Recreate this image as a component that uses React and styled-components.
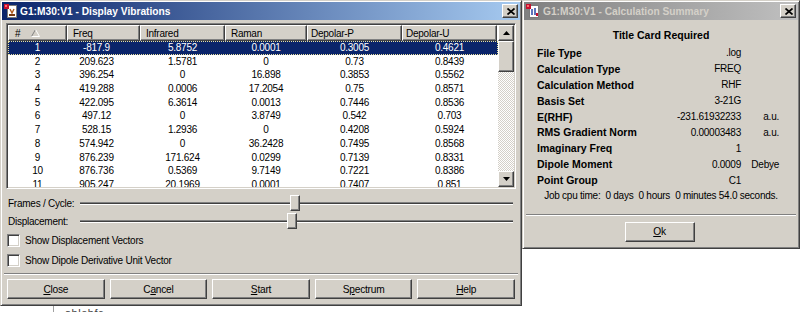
import React from 'react';
import styled, { createGlobalStyle, css } from 'styled-components';

const FACE = '#d4d0c8';
const SHADOW = '#808080';
const DARK = '#404040';
const HILITE = '#ffffff';
const UI = `"Liberation Sans", Arial, sans-serif`;
const BOLD = `"Liberation Sans", Arial, sans-serif`;

const Global = createGlobalStyle`
  html, body { margin: 0; padding: 0; background: #fff; }
  body { width: 800px; height: 312px; overflow: hidden; font-family: ${UI}; font-size: 10px; letter-spacing: -0.25px; color: #000; }
  #root { width: 800px; height: 312px; }
`;

const raised = css`
  box-sizing: border-box;
  background: ${FACE};
  border: 1px solid;
  border-color: ${HILITE} ${DARK} ${DARK} ${HILITE};
  box-shadow: inset -1px -1px ${SHADOW}, inset 1px 1px ${FACE};
`;

const sunken = css`
  box-sizing: border-box;
  border: 1px solid;
  border-color: ${SHADOW} ${HILITE} ${HILITE} ${SHADOW};
  box-shadow: inset 1px 1px ${DARK}, inset -1px -1px ${FACE};
`;

const Desktop = styled.div`
  display: flex;
  align-items: flex-start;
  width: 800px;
  height: 312px;
  overflow: hidden;
  background: #fff;
`;

const LeftColumn = styled.div`
  display: flex;
  flex-direction: column;
  width: 522px;
  height: 312px;
  flex: none;
`;

const Window = styled.div`
  box-sizing: border-box;
  width: ${(p) => p.$w}px;
  height: ${(p) => p.$h}px;
  flex: none;
  background: ${FACE};
  border: 1px solid;
  border-color: ${FACE} ${DARK} ${DARK} ${FACE};
  box-shadow: inset 1px 1px ${HILITE}, inset -1px -1px ${SHADOW};
  padding: 1px;
  display: flex;
  flex-direction: column;
`;

const TitleBar = styled.div`
  height: 18px;
  flex: none;
  display: flex;
  align-items: center;
  gap: ${(p) => (p.$active ? 2 : 3)}px;
  padding: 0 2px;
  background: ${(p) =>
    p.$active
      ? 'linear-gradient(to right, #0a246a, #a6caf0)'
      : 'linear-gradient(to right, #808080, #c0c0c0)'};
  color: ${(p) => (p.$active ? '#fff' : '#d4d0c8')};
  font: bold 10.2px ${BOLD};
  letter-spacing: 0;
  white-space: nowrap;
`;

const TitleText = styled.span`
  flex: 1;
  padding-top: 1px;
`;

const CloseButton = styled.div`
  ${raised};
  width: 16px;
  height: 14px;
  display: flex;
  align-items: center;
  justify-content: center;
  padding: 0 0 0 1px;
`;

const AppIcon = ({ variant }) => (
  <svg width="14" height="14" viewBox="0 0 14 14">
    <rect x="3.5" y="1.5" width="9" height="12" fill="#fff" stroke="#7a7a7a" />
    <rect x="0" y="0" width="5" height="5" fill="#c8102e" />
    <rect x="1" y="1" width="2" height="2" fill="#ff6a6a" />
    {variant === 'a' ? (
      <>
        <path d="M6 5 L8 9 L10 5" stroke="#b05a1a" strokeWidth="1.4" fill="none" />
        <rect x="5" y="10" width="6" height="2" fill="#7a3a10" />
      </>
    ) : (
      <>
        <path d="M6 5 L6 11 M9 4 L9 11" stroke="#1a3aa0" strokeWidth="1.4" />
        <rect x="10" y="9" width="2" height="3" fill="#c8102e" />
      </>
    )}
  </svg>
);

const CloseGlyph = () => (
  <svg width="8" height="7" viewBox="0 0 8 7">
    <path d="M0.5 0.5 L7.5 6.5 M7.5 0.5 L0.5 6.5" stroke="#000" strokeWidth="1.7" />
  </svg>
);

/* ---------- Display Vibrations ---------- */

const VibBody = styled.div`
  flex: 1;
  display: flex;
  flex-direction: column;
`;

const ListBox = styled.div`
  ${sunken};
  margin: 3px 4px 0;
  height: 166px;
  flex: none;
  padding: 1px;
  background: #fff;
  display: flex;
  overflow: hidden;
`;

const ListMain = styled.div`
  flex: 1;
  min-width: 0;
  display: flex;
  flex-direction: column;
  overflow: hidden;
`;

const GridRow = styled.div`
  display: grid;
  grid-template-columns: 59px 73px 85px 82px 95px 95px;
  flex: none;
`;

const HeaderCell = styled.div`
  ${raised};
  height: 16px;
  display: flex;
  align-items: center;
  gap: 11px;
  padding-left: ${(p) => p.$pl}px;
  white-space: nowrap;
  overflow: hidden;
`;

const DataRow = styled(GridRow)`
  height: 13.7px;
  line-height: 13.7px;
  background: ${(p) => (p.$selected ? '#0a246a' : 'transparent')};
  color: ${(p) => (p.$selected ? '#fff' : '#000')};
  outline: ${(p) => (p.$selected ? '1px dotted #e8e0a0' : 'none')};
  outline-offset: -1px;
`;

const DataCell = styled.div`
  text-align: center;
  padding-right: ${(p) => p.$pr || 0}px;
  white-space: nowrap;
`;

const ScrollBar = styled.div`
  width: 16px;
  flex: none;
  display: flex;
  flex-direction: column;
  background: repeating-conic-gradient(${FACE} 0 25%, #fff 0 50%) 0 0 / 2px 2px;
`;

const ScrollButton = styled.div`
  ${raised};
  width: 16px;
  height: 16px;
  flex: none;
  display: flex;
  align-items: center;
  justify-content: center;
`;

const ScrollThumb = styled.div`
  ${raised};
  width: 16px;
  height: 31px;
  flex: none;
`;

const ScrollTrack = styled.div`
  flex: 1;
`;

const Arrow = ({ dir }) => (
  <svg width="7" height="4" viewBox="0 0 7 4">
    <path d={dir === 'up' ? 'M3.5 0 L7 4 L0 4 Z' : 'M0 0 L7 0 L3.5 4 Z'} fill="#000" />
  </svg>
);

const SortMark = () => (
  <svg width="9" height="8" viewBox="0 0 9 8">
    <path d="M4.5 0.5 L0.5 7.5" stroke="#808080" />
    <path d="M4.5 0.5 L8.5 7.5 L0.5 7.5" stroke="#fff" fill="none" />
  </svg>
);

const SliderRow = styled.div`
  height: 18px;
  flex: none;
  display: flex;
  align-items: center;
  padding: 0 7px 0 6px;
  margin-top: ${(p) => p.$mt || 0}px;
`;

const SliderLabel = styled.span`
  width: 72px;
  flex: none;
  white-space: nowrap;
`;

const SliderTrack = styled.div`
  position: relative;
  flex: 1;
  height: 18px;
  display: flex;
  align-items: center;
`;

const SliderChannel = styled.div`
  flex: 1;
  height: 1px;
  border-top: 1px solid ${SHADOW};
  border-bottom: 1px solid ${HILITE};
  background: ${DARK};
`;

const SliderThumb = styled.div`
  ${raised};
  position: absolute;
  top: 1px;
  width: 10px;
  height: 16px;
`;

const CheckRow = styled.label`
  height: 20px;
  flex: none;
  display: flex;
  align-items: center;
  gap: 5px;
  padding-left: 5px;
  white-space: nowrap;
`;

const CheckBox = styled.span`
  ${sunken};
  width: 13px;
  height: 13px;
  background: #fff;
  flex: none;
`;

const Separator = styled.div`
  margin: ${(p) => p.$mt}px 2px 0;
  flex: none;
  border-top: 1px solid ${SHADOW};
  border-bottom: 1px solid ${HILITE};
`;

const ButtonRow = styled.div`
  display: grid;
  grid-template-columns: repeat(5, 1fr);
  gap: 5px;
  padding: 0 5px;
  margin-top: 4px;
`;

const PushButton = styled.div`
  ${raised};
  height: 20px;
  width: ${(p) => (p.$w ? `${p.$w}px` : 'auto')};
  display: flex;
  align-items: center;
  justify-content: center;
  white-space: nowrap;
  font-size: 10.2px;
`;

const Key = styled.span`
  text-decoration: underline;
  text-underline-offset: 1px;
`;

const Label = ({ text, k }) => (
  <>
    {text.slice(0, k)}
    <Key>{text[k]}</Key>
    {text.slice(k + 1)}
  </>
);

const BehindStrip = styled.div`
  flex: 1;
  display: flex;
  overflow: hidden;
  padding-left: 53px;
`;

const BehindPane = styled.div`
  border-left: 1px solid #a0a0a0;
  padding: 2px 0 0 11px;
  font-size: 11px;
  line-height: 11px;
  color: #444;
  letter-spacing: 0.5px;
`;

/* ---------- Calculation Summary ---------- */

const SummaryBody = styled.div`
  flex: 1;
  display: flex;
  flex-direction: column;
`;

const CardTitle = styled.div`
  margin-top: 9px;
  height: 16px;
  line-height: 16px;
  text-align: center;
  font: bold 10.5px ${BOLD};
  letter-spacing: 0;
`;

const SummaryGrid = styled.div`
  display: grid;
  grid-template-columns: 120px 84px 38px;
  grid-auto-rows: 15.9px;
  align-items: center;
  padding-left: 13px;
`;

const SumLabel = styled.div`
  font: bold 10.5px ${BOLD};
  letter-spacing: 0;
  white-space: nowrap;
`;

const SumValue = styled.div`
  text-align: right;
  white-space: nowrap;
`;

const JobLine = styled.div`
  height: 15.9px;
  line-height: 15.9px;
  text-align: center;
  white-space: pre;
`;

const OkRow = styled.div`
  display: flex;
  justify-content: center;
  margin-top: 6px;
  padding-right: 3px;
`;

/* ---------- data ---------- */

const columns = [
  { label: '#', pl: 6, sort: true },
  { label: 'Freq', pl: 5, pr: 14 },
  { label: 'Infrared', pl: 5 },
  { label: 'Raman', pl: 5 },
  { label: 'Depolar-P', pl: 3 },
  { label: 'Depolar-U', pl: 3 },
];

const rows = [
  ['1', '-817.9', '5.8752', '0.0001', '0.3005', '0.4621'],
  ['2', '209.623', '1.5781', '0', '0.73', '0.8439'],
  ['3', '396.254', '0', '16.898', '0.3853', '0.5562'],
  ['4', '419.288', '0.0006', '17.2054', '0.75', '0.8571'],
  ['5', '422.095', '6.3614', '0.0013', '0.7446', '0.8536'],
  ['6', '497.12', '0', '3.8749', '0.542', '0.703'],
  ['7', '528.15', '1.2936', '0', '0.4208', '0.5924'],
  ['8', '574.942', '0', '36.2428', '0.7495', '0.8568'],
  ['9', '876.239', '171.624', '0.0299', '0.7139', '0.8331'],
  ['10', '876.736', '0.5369', '9.7149', '0.7221', '0.8386'],
  ['11', '905.247', '20.1969', '0.0001', '0.7407', '0.851'],
];

const sliders = [
  { label: 'Frames / Cycle:', value: 0.484, mt: 5 },
  { label: 'Displacement:', value: 0.479, mt: 0 },
];

const summary = [
  ['File Type', '.log', ''],
  ['Calculation Type', 'FREQ', ''],
  ['Calculation Method', 'RHF', ''],
  ['Basis Set', '3-21G', ''],
  ['E(RHF)', '-231.61932233', 'a.u.'],
  ['RMS Gradient Norm', '0.00003483', 'a.u.'],
  ['Imaginary Freq', '1', ''],
  ['Dipole Moment', '0.0009', 'Debye'],
  ['Point Group', 'C1', ''],
];

const buttons = [
  ['Close', 0],
  ['Cancel', 1],
  ['Start', 0],
  ['Spectrum', 1],
  ['Help', 0],
];

export default function App() {
  return (
    <>
      <Global />
      <Desktop>
        <LeftColumn>
          <Window $w={522} $h={306}>
            <TitleBar $active>
              <AppIcon variant="a" />
              <TitleText>G1:M30:V1 - Display Vibrations</TitleText>
              <CloseButton>
                <CloseGlyph />
              </CloseButton>
            </TitleBar>
            <VibBody>
              <ListBox>
                <ListMain>
                  <GridRow>
                    {columns.map((c) => (
                      <HeaderCell key={c.label} $pl={c.pl}>
                        {c.label}
                        {c.sort && <SortMark />}
                      </HeaderCell>
                    ))}
                  </GridRow>
                  {rows.map((r, i) => (
                    <DataRow key={r[0]} $selected={i === 0}>
                      {r.map((v, j) => (
                        <DataCell key={j} $pr={columns[j].pr}>
                          {v}
                        </DataCell>
                      ))}
                    </DataRow>
                  ))}
                </ListMain>
                <ScrollBar>
                  <ScrollButton>
                    <Arrow dir="up" />
                  </ScrollButton>
                  <ScrollThumb />
                  <ScrollTrack />
                  <ScrollButton>
                    <Arrow dir="down" />
                  </ScrollButton>
                </ScrollBar>
              </ListBox>
              {sliders.map((s) => (
                <SliderRow key={s.label} $mt={s.mt}>
                  <SliderLabel>{s.label}</SliderLabel>
                  <SliderTrack>
                    <SliderChannel />
                    <SliderThumb style={{ left: `${s.value * 100}%` }} />
                  </SliderTrack>
                </SliderRow>
              ))}
              <CheckRow>
                <CheckBox />
                Show Displacement Vectors
              </CheckRow>
              <CheckRow>
                <CheckBox />
                Show Dipole Derivative Unit Vector
              </CheckRow>
              <Separator $mt={3} />
              <ButtonRow>
                {buttons.map(([t, k]) => (
                  <PushButton key={t}>
                    <Label text={t} k={k} />
                  </PushButton>
                ))}
              </ButtonRow>
            </VibBody>
          </Window>
          <BehindStrip>
            <BehindPane>ablebfc</BehindPane>
          </BehindStrip>
        </LeftColumn>
        <Window $w={278} $h={249}>
          <TitleBar>
            <AppIcon variant="b" />
            <TitleText>G1:M30:V1 - Calculation Summary</TitleText>
            <CloseButton>
              <CloseGlyph />
            </CloseButton>
          </TitleBar>
          <SummaryBody>
            <CardTitle>Title Card Required</CardTitle>
            <SummaryGrid>
              {summary.map(([l, v, u]) => (
                <React.Fragment key={l}>
                  <SumLabel>{l}</SumLabel>
                  <SumValue>{v}</SumValue>
                  <SumValue>{u}</SumValue>
                </React.Fragment>
              ))}
            </SummaryGrid>
            <JobLine>{'Job cpu time:  0 days  0 hours  0 minutes 54.0 seconds.'}</JobLine>
            <Separator $mt={10} />
            <OkRow>
              <PushButton $w={70}>
                <Label text="Ok" k={0} />
              </PushButton>
            </OkRow>
          </SummaryBody>
        </Window>
      </Desktop>
    </>
  );
}
